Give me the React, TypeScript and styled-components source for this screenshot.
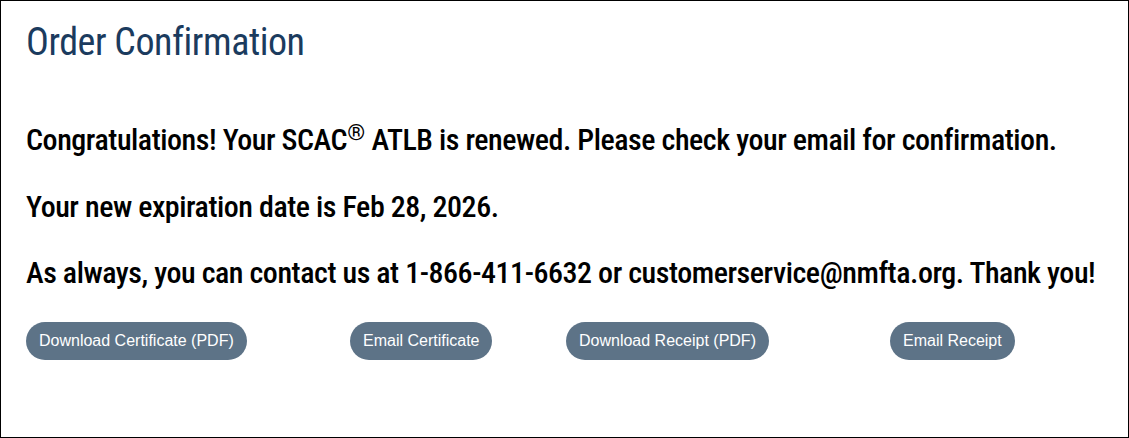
import React from 'react';
import styled, { createGlobalStyle } from 'styled-components';

const GlobalStyle = createGlobalStyle`
  html, body {
    margin: 0;
    padding: 0;
    background: #ffffff;
  }
  * {
    box-sizing: border-box;
  }
`;

const Panel = styled.main`
  width: 1129px;
  height: 438px;
  border: 1px solid #000000;
  padding: 18px 22px 0 25px;
  font-family: Roboto, 'Open Sans', 'Liberation Sans', sans-serif;
  font-stretch: 75%;
  color: #000000;
`;

const Title = styled.h1`
  margin: 0;
  font-size: 38px;
  line-height: 46px;
  font-weight: 400;
  letter-spacing: -0.45px;
  color: #1b3b5e;
`;

const Message = styled.section`
  margin-top: 57px;
  display: flex;
  flex-direction: column;
  gap: 30.5px;
`;

const Line = styled.p`
  margin: 0;
  font-size: 30px;
  line-height: 36px;
  font-weight: 500;
  letter-spacing: -0.45px;
  white-space: nowrap;
`;

const Mark = styled.sup`
  font-size: 0.76em;
  font-weight: 400;
  line-height: 0;
  vertical-align: 0.42em;
  letter-spacing: 0;
`;

const ButtonRow = styled.div`
  margin-top: 31px;
  display: grid;
  grid-template-columns: 324px 216px 324px 1fr;
  justify-items: start;
`;

const PillButton = styled.button`
  height: 38px;
  padding: 0 13px;
  border: none;
  border-radius: 19px;
  background: #5d7387;
  color: #ffffff;
  font-family: 'Liberation Sans', Arial, sans-serif;
  font-stretch: normal;
  font-size: 16px;
  line-height: 20px;
  cursor: pointer;
  white-space: nowrap;

  &:hover {
    background: #4b6075;
  }
`;

const actions = [
  'Download Certificate (PDF)',
  'Email Certificate',
  'Download Receipt (PDF)',
  'Email Receipt',
];

const App: React.FC = () => {
  return (
    <>
      <GlobalStyle />
      <Panel>
        <Title>Order Confirmation</Title>
        <Message>
          <Line>
            Congratulations! Your SCAC<Mark>®</Mark> ATLB is renewed. Please check your email for confirmation.
          </Line>
          <Line>Your new expiration date is Feb 28, 2026.</Line>
          <Line>
            As always, you can contact us at 1-866-411-6632 or customerservice@nmfta.org. Thank you!
          </Line>
        </Message>
        <ButtonRow>
          {actions.map((label) => (
            <PillButton key={label} type="button">
              {label}
            </PillButton>
          ))}
        </ButtonRow>
      </Panel>
    </>
  );
};

export default App;
